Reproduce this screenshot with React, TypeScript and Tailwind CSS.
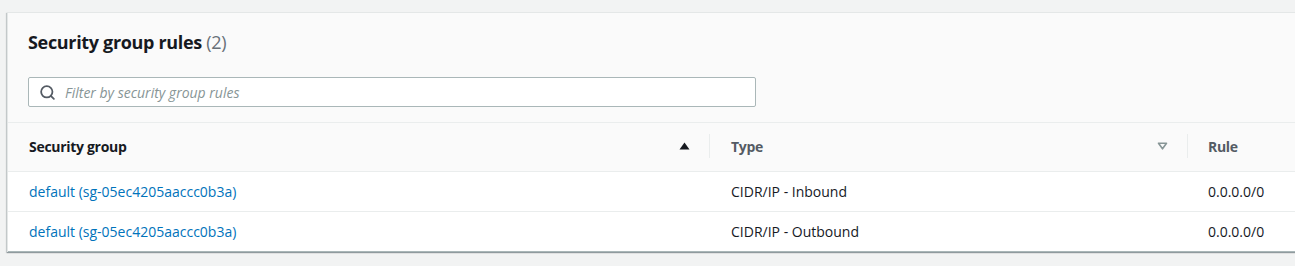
import { Search } from 'lucide-react'

const rows = [
  { group: 'default (sg-05ec4205aaccc0b3a)', type: 'CIDR/IP - Inbound', rule: '0.0.0.0/0' },
  { group: 'default (sg-05ec4205aaccc0b3a)', type: 'CIDR/IP - Outbound', rule: '0.0.0.0/0' },
]

export default function App() {
  return (
    <div
      className="w-[1295px] h-[266px] overflow-hidden bg-[#f2f3f3] pt-[12px] pl-[7px]"
      style={{ fontFamily: '"Open Sans", "Noto Sans", sans-serif' }}
    >
      <div className="w-[1340px] bg-white border-t border-l border-[#e4e7e7] shadow-[0_1px_1px_0_rgba(0,28,36,0.3),-1px_1px_1px_0_rgba(0,28,36,0.15)]">
        {/* Header */}
        <div className="bg-[#fafafa] px-[20px] pt-[16px] pb-[15px] border-b border-[#eaeded]">
          <h2 className="text-[18px] leading-[26px] font-bold tracking-[-0.33px] text-[#16191f]">
            Security group rules <span className="font-normal text-[#687078]">(2)</span>
          </h2>
          <div className="mt-[22px] w-[728px] h-[30px] flex items-center gap-[9px] px-[10px] bg-white border border-[#aab7b8] rounded-[2px]">
            <Search size={17} strokeWidth={2.5} className="text-[#545b64] shrink-0" />
            <span className="text-[14px] italic text-[#879596]">Filter by security group rules</span>
          </div>
        </div>

        {/* Table header */}
        <div className="flex h-[49px] pb-[2px] bg-[#fafafa] border-b border-[#eaeded] text-[14px] font-bold tracking-[-0.3px] text-[#16191f]">
          <div className="w-[701px] flex items-center justify-between pl-[21px] pr-[19px]">
            <span>Security group</span>
            <svg width="11" height="8" viewBox="0 0 11 8">
              <path d="M0.5 7.5 L5.5 0.5 L10.5 7.5 Z" fill="#16191f" />
            </svg>
          </div>
          <div className="w-px h-[24px] self-center bg-[#eaeded]" />
          <div className="w-[477px] flex items-center justify-between pl-[21px] pr-[19px] text-[#545b64]">
            <span>Type</span>
            <svg width="11" height="8" viewBox="0 0 11 8">
              <path d="M1.5 1.2 L9.5 1.2 L5.5 6.8 Z" fill="none" stroke="#879596" strokeWidth="1.6" strokeLinejoin="round" />
            </svg>
          </div>
          <div className="w-px h-[24px] self-center bg-[#eaeded]" />
          <div className="flex-1 flex items-center pl-[20px] text-[#545b64]">Rule</div>
        </div>

        {/* Rows */}
        {rows.map((r, i) => (
          <div
            key={i}
            className={`flex h-[40px] items-center text-[14px] text-[#16191f] ${i < rows.length - 1 ? 'border-b border-[#eaeded]' : 'border-b border-[#aab7b8]'}`}
          >
            <div className="w-[702px] pl-[21px]">
              <a className="text-[#0073bb]">{r.group}</a>
            </div>
            <div className="w-[478px] pl-[21px]">{r.type}</div>
            <div className="flex-1 pl-[20px]">{r.rule}</div>
          </div>
        ))}
      </div>
    </div>
  )
}
